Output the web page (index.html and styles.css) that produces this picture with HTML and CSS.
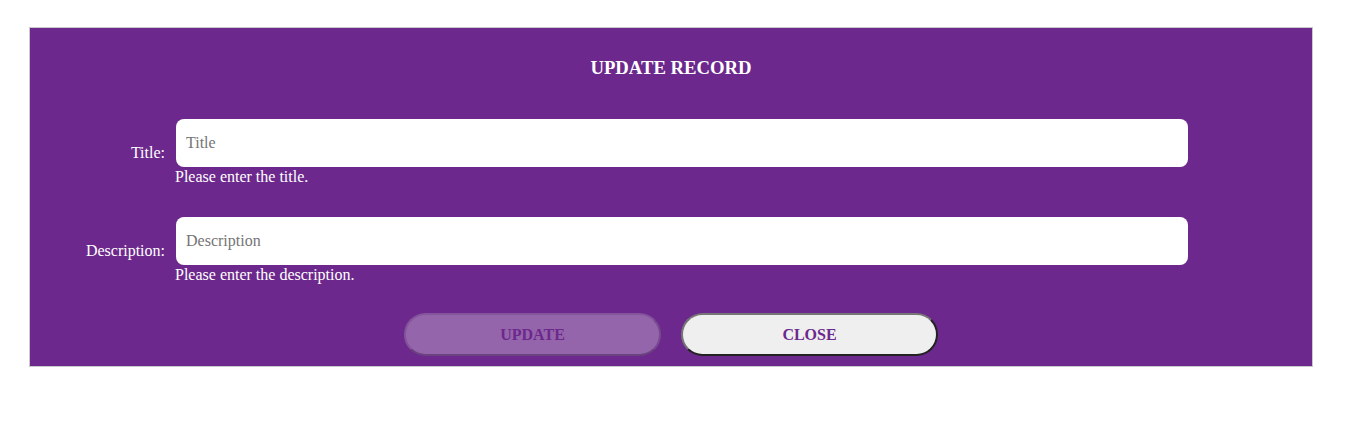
FILE: index.html
```html
<!DOCTYPE html>
<html>
<head>
<meta charset="utf-8">
<link rel="stylesheet" href="styles.css">
</head>
<body>
<div class="modal">
  <h3 class="modal-title">UPDATE RECORD</h3>
  <div class="form">
    <div class="row">
      <label class="label">Title:</label>
      <div class="field">
        <input class="input" type="text" placeholder="Title">
        <div class="help">Please enter the title.</div>
      </div>
    </div>
    <div class="row">
      <label class="label">Description:</label>
      <div class="field">
        <input class="input" type="text" placeholder="Description">
        <div class="help">Please enter the description.</div>
      </div>
    </div>
  </div>
  <div class="actions">
    <button class="btn btn-update" disabled>UPDATE</button>
    <button class="btn btn-close">CLOSE</button>
  </div>
</div>
</body>
</html>
```

FILE: styles.css
```css
html, body {
  margin: 0;
  padding: 0;
  background: #ffffff;
  font-family: "Liberation Serif", "Times New Roman", serif;
}

.modal {
  box-sizing: border-box;
  width: 1284px;
  margin: 27px 0 0 29px;
  background: #6c288c;
  border: 1px solid #c9c9c9;
  padding: 29px 0 10px 0;
  color: #ffffff;
}

.modal-title {
  margin: 0;
  text-align: center;
  font-size: 18.72px;
  line-height: 21px;
  font-weight: bold;
}

.form {
  display: flex;
  flex-direction: column;
  gap: 31px;
  margin-top: 41px;
}

.row {
  display: flex;
  align-items: center;
}

.label {
  width: 135px;
  padding-right: 10px;
  text-align: right;
  font-size: 16px;
  line-height: 18px;
}

.field {
  display: flex;
  flex-direction: column;
}

.input {
  box-sizing: border-box;
  width: 1012px;
  height: 48px;
  margin: 0 0 0 1px;
  border: none;
  border-radius: 8px;
  background: #ffffff;
  padding: 0 10px;
  font-family: "Liberation Serif", "Times New Roman", serif;
  font-size: 16px;
  color: #000;
  outline: none;
}

.input::placeholder {
  color: #757575;
}

.help {
  font-size: 16px;
  line-height: 18px;
  padding-top: 1px;
}

.actions {
  display: flex;
  justify-content: center;
  gap: 20px;
  margin-top: 29px;
}

.btn {
  box-sizing: border-box;
  width: 257px;
  height: 43px;
  border-radius: 22px;
  border-width: 2px;
  border-style: solid;
  font-family: "Liberation Serif", "Times New Roman", serif;
  font-size: 16px;
  font-weight: bold;
  color: #6c288c;
  padding: 0;
}

.btn-update {
  background: #9565ab;
  border-color: #84559b #7a4a90 #6a4280 #84559b;
}

.btn-close {
  background: #efefef;
  border-color: #767676 #222222 #222222 #767676;
}
```
